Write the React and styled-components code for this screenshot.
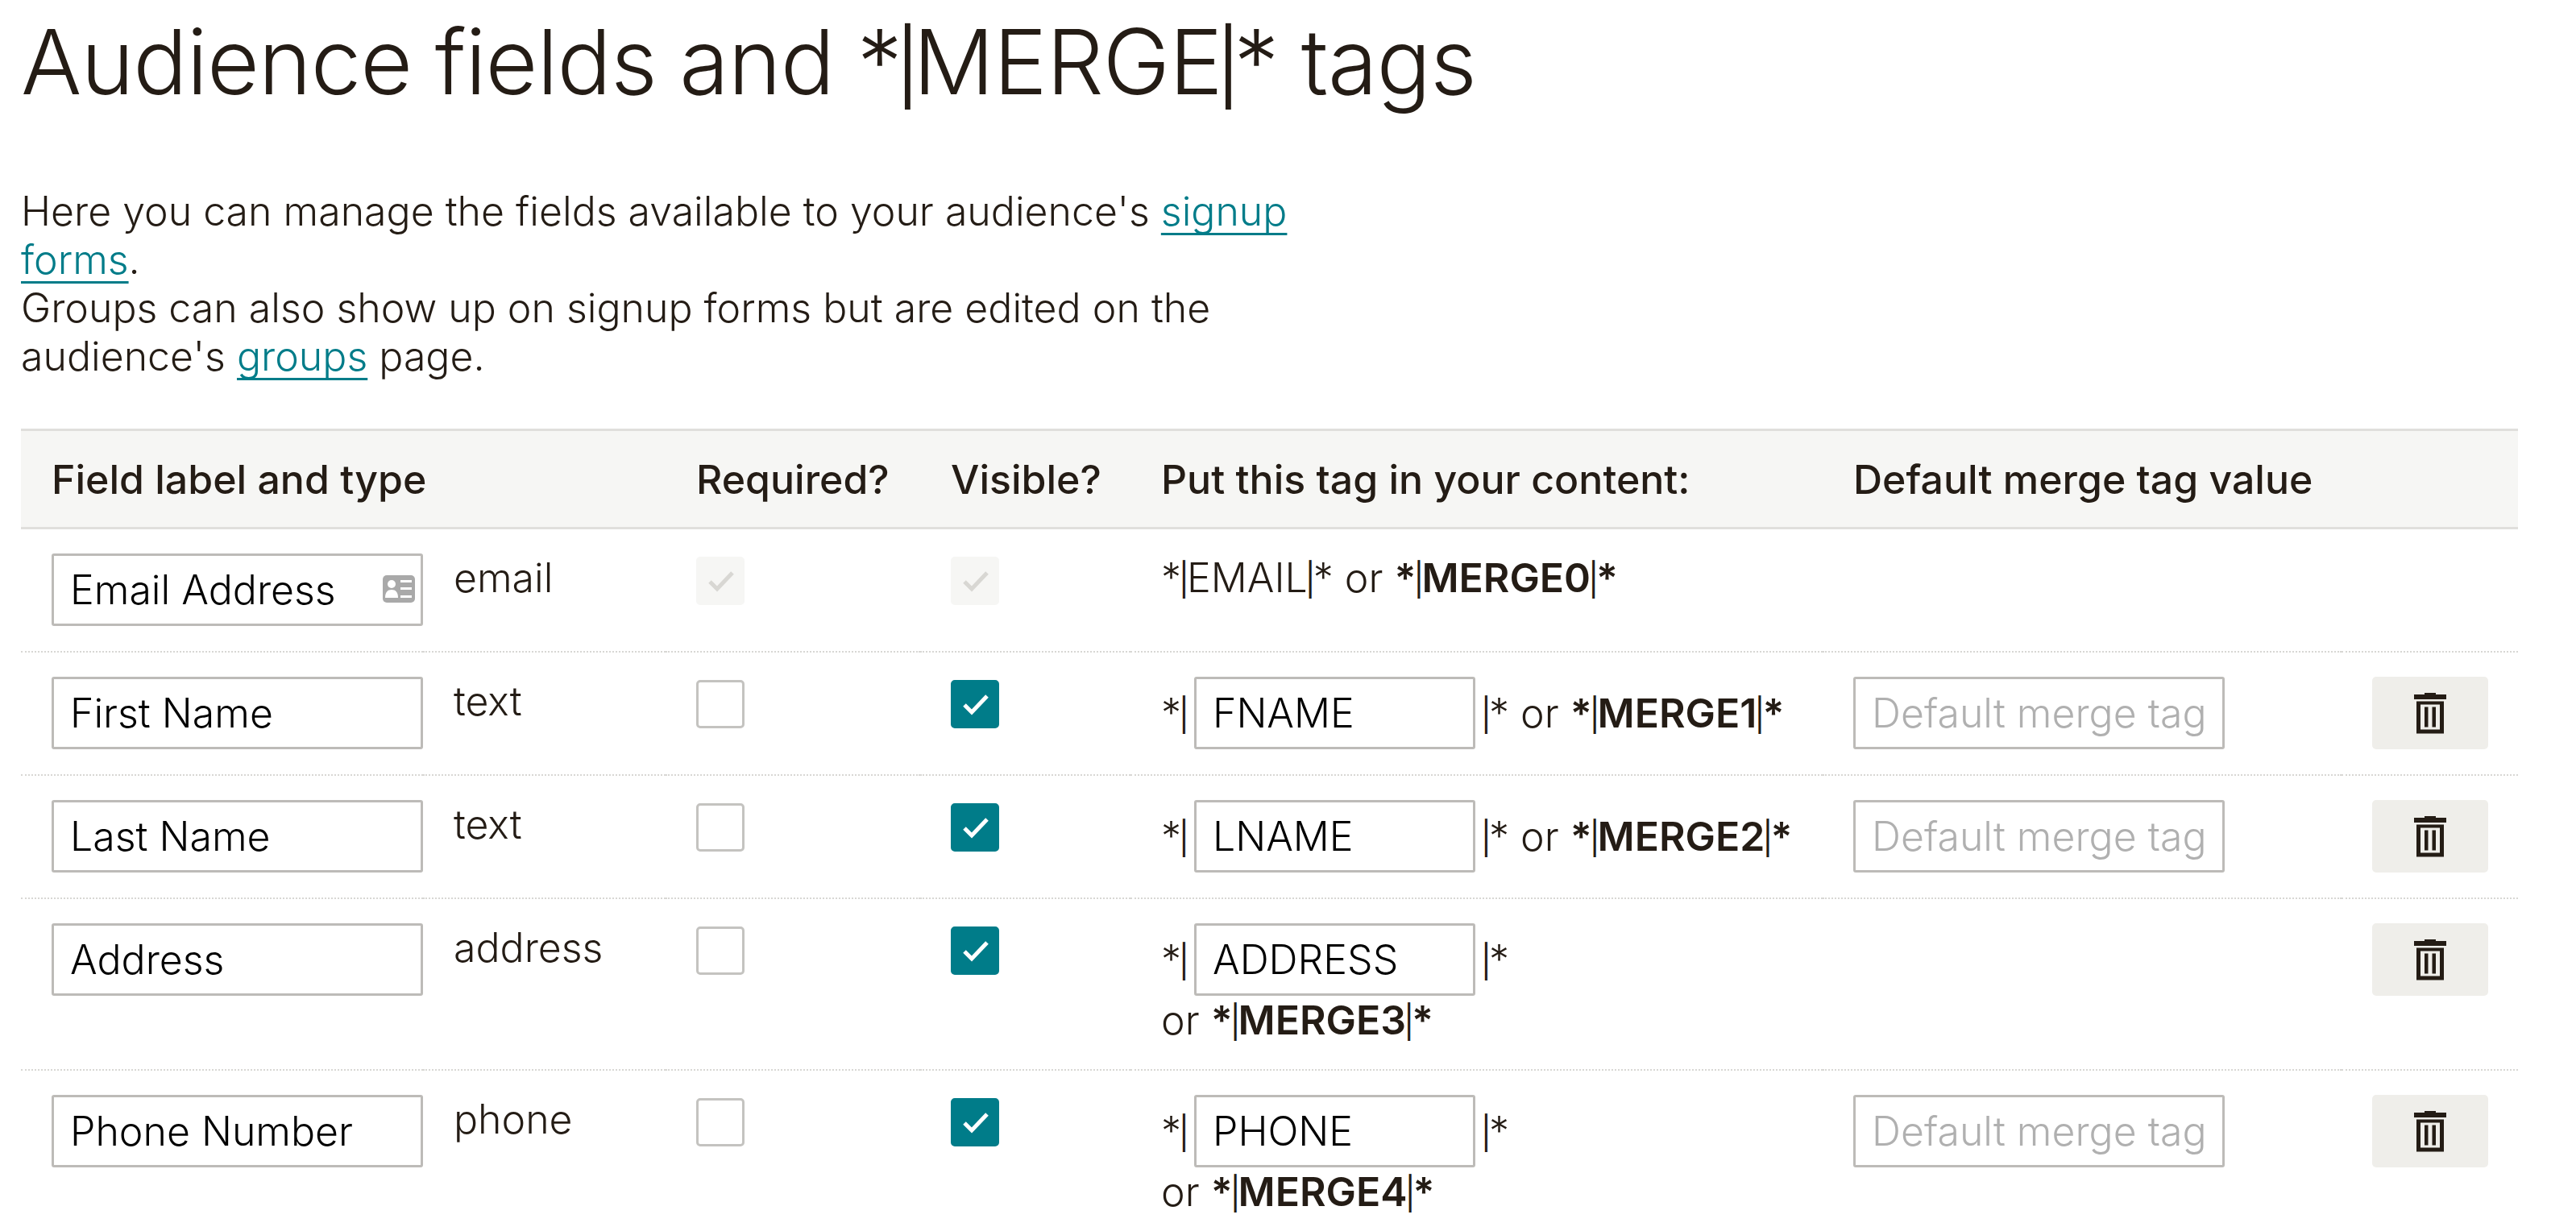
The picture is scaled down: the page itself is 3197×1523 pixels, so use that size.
import React from "react";
import styled, { createGlobalStyle } from "styled-components";

const Global = createGlobalStyle`
  html, body { margin: 0; padding: 0; background: #fff; height: 100%; overflow: hidden; }
  body { font-family: Inter, "Liberation Sans", sans-serif; color: #241c15; font-weight: 300; }
`;
const Page = styled.main`
  padding: 0 72px 0 26px;
`;
const Title = styled.h1`
  margin: 0;
  padding-top: 8px;
  font-size: 112px;
  line-height: 136px;
  font-weight: 300;
  letter-spacing: -1px;
  word-spacing: -2px;
`;
const Intro = styled.p`
  margin: 88px 0 0;
  width: 1600px;
  font-size: 50px;
  line-height: 60px;
`;
const TextLink = styled.a`
  color: #007c89;
  text-decoration: underline;
  text-underline-offset: 9px;
  text-decoration-thickness: 3px;
  text-decoration-skip-ink: none;
`;
const Table = styled.table`
  margin-top: 60px;
  width: 3099px;
  border-collapse: collapse;
  table-layout: fixed;
`;
const Th = styled.th`
  background: #f6f6f4;
  border-top: 3px solid #e0dfdc;
  border-bottom: 3px solid #e0dfdc;
  height: 119px;
  padding: 0 0 0 38px;
  text-align: left;
  font-size: 50px;
  font-weight: 500;
`;
const Row = styled.tr`
  border-bottom: 2px dotted #d8d7d4;
`;
const Td = styled.td`
  vertical-align: top;
  padding: 30px 0 31px 38px;
  font-size: 50px;
  line-height: 60px;
`;
const TypeText = styled.span`
  display: block;
`;
const Input = styled.input`
  box-sizing: border-box;
  display: block;
  width: ${p => p.$w}px;
  height: 90px;
  border: 3px solid #bdbbb8;
  border-radius: 3px;
  padding: 0 20px;
  font: 300 50px Inter, "Liberation Sans", sans-serif;
  color: #000;
  background: #fff;
  &::placeholder { color: #b0b0b0; opacity: 1; }
`;
const InputWrap = styled.div`
  position: relative;
  width: 461px;
`;
const Card = styled.svg`
  position: absolute;
  right: 10px;
  top: 27px;
`;
const Box = styled.span`
  display: flex;
  box-sizing: border-box;
  width: 60px;
  height: 60px;
  margin-top: 4px;
  border-radius: 5px;
  background: ${p => (p.$disabled ? "#f6f6f4" : p.$on ? "#007c89" : "#fff")};
  border: 3px solid ${p => (p.$disabled ? "#f6f6f4" : p.$on ? "#007c89" : "#c4c3c0")};
`;
const TagRow = styled.div`
  display: flex;
  align-items: center;
  height: 90px;
  white-space: nowrap;
`;
const Line = styled.div`
  white-space: nowrap;
`;
const TagInput = styled(Input)`
  margin: 0 10px 0 9px;
`;
const Strong = styled.b`
  font-weight: 600;
`;
const Pipe = styled.span`
  font-size: 0.8em;
  line-height: 0;
  font-weight: 400;
  margin: 0 -0.08em;
  vertical-align: 0.02em;
`;
const DeleteButton = styled.button`
  display: flex;
  align-items: center;
  justify-content: center;
  width: 144px;
  height: 90px;
  border: 0;
  padding: 0;
  border-radius: 5px;
  background: #efeeea;
`;

const Tagged = ({ text }) =>
  text.split("|").map((part, i) => (
    <React.Fragment key={i}>
      {i > 0 && <Pipe>|</Pipe>}
      {part}
    </React.Fragment>
  ));

const Check = ({ color = "#fff" }) => (
  <svg width="54" height="54" viewBox="0 0 54 54">
    <path d="M14 28l9 9L42 17" fill="none" stroke={color} strokeWidth="5" />
  </svg>
);
const Trash = () => (
  <svg width="40" height="51" viewBox="0 0 40 51">
    <path fill="#241c15" d="M13 0h14v2h13v6H0V2h13z" />
    <path fill="#241c15" fillRule="evenodd" d="M3 10.5h34v40H3zM8 14.5v31h24v-31z" />
    <path fill="#241c15" d="M13 17.5h4.5v25H13zM22.5 17.5H27v25h-4.5z" />
  </svg>
);
const CheckBox = ({ on, disabled }) => (
  <Box $on={on} $disabled={disabled}>
    {disabled ? <Check color="#d8d7d3" /> : on ? <Check /> : null}
  </Box>
);

const rows = [
  { name: "First Name", type: "text", tag: "FNAME", merge: "*|MERGE1|*", def: true },
  { name: "Last Name", type: "text", tag: "LNAME", merge: "*|MERGE2|*", def: true },
  { name: "Address", type: "address", tag: "ADDRESS", merge: "*|MERGE3|*", wrap: true },
  { name: "Phone Number", type: "phone", tag: "PHONE", merge: "*|MERGE4|*", wrap: true, def: true },
];

export default function App() {
  return (
    <Page>
      <Global />
      <Title>Audience fields and <Tagged text="*|MERGE|*" /> tags</Title>
      <Intro>
        Here you can manage the fields available to your audience's <TextLink>signup forms</TextLink>.<br />
        Groups can also show up on signup forms but are edited on the audience's <TextLink>groups</TextLink> page.
      </Intro>
      <Table>
        <colgroup>
          <col width="499" /><col width="301" /><col width="316" /><col width="261" /><col width="859" /><col width="644" /><col width="219" />
        </colgroup>
        <thead>
          <tr>
            <Th colSpan="2">Field label and type</Th>
            <Th>Required?</Th>
            <Th>Visible?</Th>
            <Th>Put this tag in your content:</Th>
            <Th colSpan="2">Default merge tag value</Th>
          </tr>
        </thead>
        <tbody>
          <Row>
            <Td>
              <InputWrap>
                <Input $w={461} defaultValue="Email Address" />
                <Card width="40" height="34" viewBox="0 0 40 34">
                  <rect width="40" height="34" rx="5" fill="#a9a9a9" />
                  <circle cx="11" cy="11" r="5" fill="#fff" />
                  <path d="M3 28c0-7 3-10 8-10s8 3 8 10z" fill="#fff" />
                  <path d="M22 6h14v3H22zM22 15h14v3H22zM22 25h14v3H22z" fill="#fff" />
                </Card>
              </InputWrap>
            </Td>
            <Td><TypeText>email</TypeText></Td>
            <Td><CheckBox disabled on /></Td>
            <Td><CheckBox disabled on /></Td>
            <Td><Tagged text="*|EMAIL|*" /> or <Strong><Tagged text="*|MERGE0|*" /></Strong></Td>
            <Td />
            <Td />
          </Row>
          {rows.map(r => (
            <Row key={r.name}>
              <Td><Input $w={461} defaultValue={r.name} /></Td>
              <Td><TypeText>{r.type}</TypeText></Td>
              <Td><CheckBox /></Td>
              <Td><CheckBox on /></Td>
              <Td>
                <TagRow>
                  <span><Tagged text="*|" /></span>
                  <TagInput $w={349} defaultValue={r.tag} />
                  <span>
                    <Tagged text="|*" />
                    {!r.wrap && <> or <Strong><Tagged text={r.merge} /></Strong></>}
                  </span>
                </TagRow>
                {r.wrap && <Line>or <Strong><Tagged text={r.merge} /></Strong></Line>}
              </Td>
              <Td>{r.def && <Input $w={461} placeholder="Default merge tag value" />}</Td>
              <Td><DeleteButton aria-label="Delete"><Trash /></DeleteButton></Td>
            </Row>
          ))}
        </tbody>
      </Table>
    </Page>
  );
}
